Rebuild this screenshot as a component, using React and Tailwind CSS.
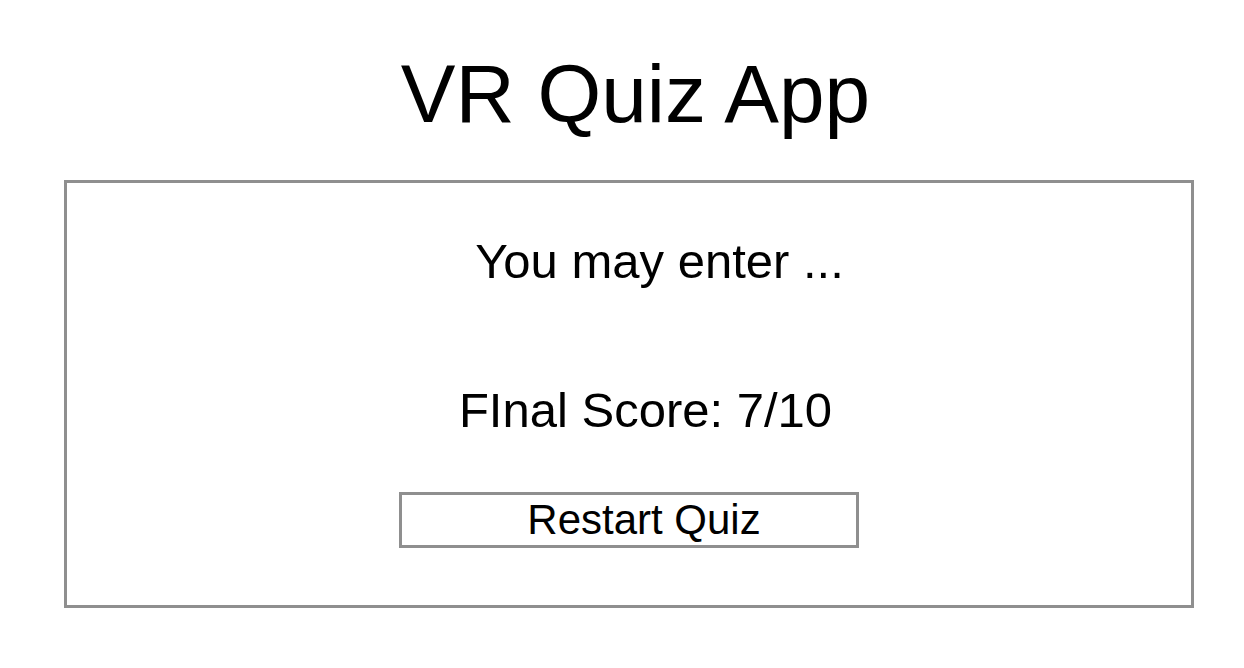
export default function App() {
  return (
    <div className="min-h-screen bg-white text-black font-['Liberation_Sans',Arial,sans-serif]">
      <h1 className="pt-[53px] pl-[27px] text-center text-[82px] leading-none">VR Quiz App</h1>

      <div className="mt-[45px] ml-[64px] w-[1130px] h-[428px] border-[3px] border-[#8f8f8f] flex flex-col items-center">
        <p className="mt-[54px] pl-[61px] text-[49px] leading-none">You may enter ...</p>
        <p className="mt-[100px] pl-[33px] text-[49px] leading-none">FInal Score: 7/10</p>
        <button className="mt-[57px] w-[460px] h-[56px] border-[3px] border-[#8f8f8f] pl-[30px] text-[42px] leading-none">
          Restart Quiz
        </button>
      </div>
    </div>
  );
}
